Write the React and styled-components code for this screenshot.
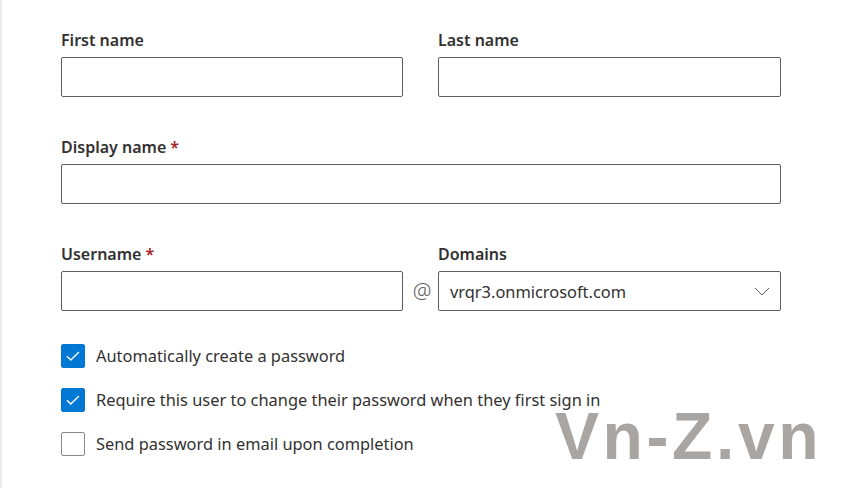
import styled, { createGlobalStyle } from "styled-components";

const GlobalStyle = createGlobalStyle`
  html, body {
    margin: 0;
    padding: 0;
    background: #fff;
  }
  body {
    font-family: "Noto Sans", "Open Sans", sans-serif;
    color: #323130;
  }
`;

const Page = styled.div`
  position: relative;
  width: 842px;
  height: 488px;
  box-sizing: border-box;
  border-left: 2px solid #e9e9e9;
  padding: 29px 0 0 59px;
  overflow: hidden;
`;

const Grid = styled.div`
  display: grid;
  grid-template-columns: 342px 35px 343px;
  row-gap: 39px;
`;

const Field = styled.div`
  grid-column: ${(p) => p.$col || "auto"};
  display: flex;
  flex-direction: column;
  gap: 6px;
`;

const Label = styled.label`
  font-size: 16px;
  line-height: 22px;
  font-weight: 600;
  color: #323130;
`;

const Required = styled.span`
  color: #a4262c;
  margin-left: 4px;
`;

const Input = styled.div`
  height: 40px;
  box-sizing: border-box;
  border: 1px solid #605e5c;
  border-radius: 2px;
  background: #fff;
  display: flex;
  align-items: center;
  padding: 0 11px;
  font-size: 16.4px;
  color: #323130;
`;

const Select = styled(Input)`
  justify-content: space-between;
  padding-right: 10px;
`;

const At = styled.div`
  grid-column: 2;
  align-self: end;
  height: 40px;
  display: flex;
  align-items: center;
  justify-content: center;
  padding-left: 3px;
  font-size: 21px;
  font-weight: 300;
  color: #605e5c;
`;

const Checks = styled.div`
  display: flex;
  flex-direction: column;
  gap: 20px;
  margin-top: 33px;
`;

const CheckRow = styled.div`
  display: flex;
  align-items: center;
  gap: 11px;
  font-size: 16.4px;
  line-height: 24px;
  color: #323130;
`;

const Box = styled.span`
  width: 24px;
  height: 24px;
  box-sizing: border-box;
  border-radius: 2px;
  border: 1px solid ${(p) => (p.$checked ? "#0078d4" : "#8a8886")};
  background: ${(p) => (p.$checked ? "#0078d4" : "#fff")};
  display: flex;
  align-items: center;
  justify-content: center;
`;

const Watermark = styled.div`
  position: absolute;
  left: 553px;
  top: 398px;
  font-family: "Liberation Sans", Arial, sans-serif;
  font-weight: 700;
  font-size: 66px;
  letter-spacing: 3.6px;
  color: #a9a5a2;
  line-height: 76px;
`;

const Check = () => (
  <svg width="14" height="10" viewBox="0 0 14 10" fill="none">
    <path d="M1 5.2 L4.8 9 L13 1" stroke="#fff" strokeWidth="1.4" />
  </svg>
);

const Chevron = () => (
  <svg width="16" height="9" viewBox="0 0 16 9" fill="none">
    <path d="M1 1 L8 8 L15 1" stroke="#605e5c" strokeWidth="1" />
  </svg>
);

const checks = [
  { text: "Automatically create a password", checked: true },
  { text: "Require this user to change their password when they first sign in", checked: true },
  { text: "Send password in email upon completion", checked: false },
];

export default function App() {
  return (
    <Page>
      <GlobalStyle />
      <Grid>
        <Field $col="1">
          <Label>First name</Label>
          <Input />
        </Field>
        <Field $col="3">
          <Label>Last name</Label>
          <Input />
        </Field>
        <Field $col="1 / 4">
          <Label>
            Display name<Required>*</Required>
          </Label>
          <Input />
        </Field>
        <Field $col="1">
          <Label>
            Username<Required>*</Required>
          </Label>
          <Input />
        </Field>
        <At>@</At>
        <Field $col="3">
          <Label>Domains</Label>
          <Select>
            <span>vrqr3.onmicrosoft.com</span>
            <Chevron />
          </Select>
        </Field>
      </Grid>
      <Checks>
        {checks.map((c) => (
          <CheckRow key={c.text}>
            <Box $checked={c.checked}>{c.checked && <Check />}</Box>
            {c.text}
          </CheckRow>
        ))}
      </Checks>
      <Watermark>Vn-Z.vn</Watermark>
    </Page>
  );
}
